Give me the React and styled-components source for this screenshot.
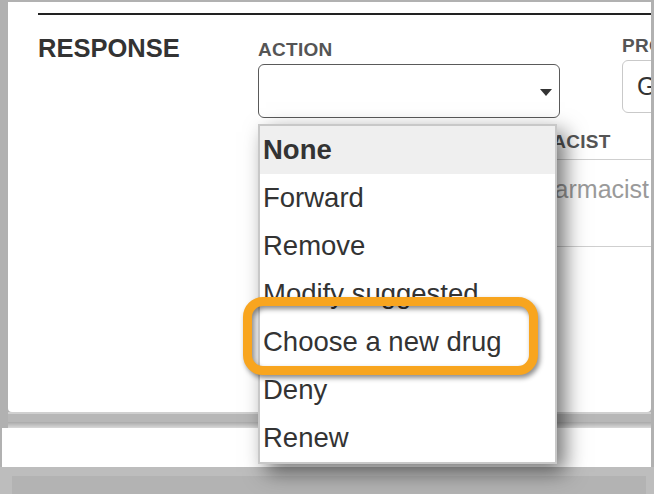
import React from 'react';
import styled, { createGlobalStyle } from 'styled-components';

const GlobalStyle = createGlobalStyle`
  html, body {
    margin: 0;
    padding: 0;
    background: #b1b1b1;
  }
  body {
    font-family: 'Liberation Sans', Arial, sans-serif;
    color: #333;
  }
  * {
    box-sizing: border-box;
  }
`;

const Screen = styled.div`
  width: 654px;
  height: 494px;
  overflow: hidden;
  padding-top: 2px;
  display: flex;
  flex-direction: column;
`;

const Card = styled.section`
  position: relative;
  flex-shrink: 0;
  height: 410px;
  margin: 0 3px 0 8px;
  padding-top: 11px;
  background: #fff;
  border-radius: 0 0 4px 4px;
  overflow-x: clip;
`;

const Rule = styled.div`
  height: 2px;
  margin-left: 30px;
  background: #222;
`;

const FormRow = styled.div`
  display: flex;
  align-items: flex-start;
  padding-left: 30px;
  margin-top: ${p => p.$top}px;
`;

const SectionTitle = styled.h2`
  flex-shrink: 0;
  width: 220px;
  margin: 0;
  font-size: 25.5px;
  line-height: 28px;
  font-weight: 700;
  color: #333;
`;

const Field = styled.div`
  flex-shrink: 0;
  width: ${p => p.$width}px;
  margin-left: ${p => p.$left || 0}px;
  margin-top: ${p => p.$top || 0}px;
`;

const Label = styled.div`
  font-size: 19px;
  line-height: 20px;
  font-weight: 700;
  letter-spacing: 0.3px;
  color: #555;
  text-transform: uppercase;
  white-space: nowrap;
  margin-bottom: ${p => p.$gap}px;
`;

const SelectWrap = styled.div`
  position: relative;
`;

const SelectBox = styled.div`
  display: flex;
  align-items: center;
  justify-content: ${p => (p.$muted ? 'flex-start' : 'flex-end')};
  height: ${p => p.$height}px;
  padding: ${p => (p.$muted ? '0 14px' : '3px 7px 0 14px')};
  border: 1.5px solid ${p => (p.$muted ? '#c9c9c9' : '#5a5a5a')};
  border-radius: 6px;
  background: #fff;
  font-size: 25px;
  color: #333;
  white-space: nowrap;
`;

const Caret = styled.span`
  width: 0;
  height: 0;
  border-left: 6.5px solid transparent;
  border-right: 6.5px solid transparent;
  border-top: 7px solid #333;
`;

const OptionList = styled.ul`
  position: absolute;
  z-index: 10;
  top: calc(100% + 6px);
  left: 0;
  width: 299px;
  margin: 0;
  padding: 0;
  list-style: none;
  background: #fff;
  border: 2px solid #c8c8c8;
  box-shadow: 8px 8px 20px rgba(0, 0, 0, 0.55);
`;

const Option = styled.li`
  height: 48px;
  padding-left: 3px;
  font-size: 27.5px;
  line-height: 48px;
  white-space: nowrap;
  color: #333;
  font-weight: ${p => (p.$active ? 700 : 400)};
  background: ${p => (p.$active ? '#efefef' : '#fff')};
`;

const Highlight = styled.div`
  position: absolute;
  left: -17px;
  top: 171px;
  width: 295px;
  height: 78px;
  border: 9px solid #f8a51f;
  border-radius: 20px;
  filter: drop-shadow(2px 3px 2.5px rgba(0, 0, 0, 0.45));
  pointer-events: none;
`;

const NoteBox = styled.textarea`
  display: block;
  width: 100%;
  height: 88px;
  margin: 0;
  padding: 12px 14px 12px 42px;
  border: 1.5px solid #cfcfcf;
  border-radius: 6px;
  resize: none;
  outline: none;
  font-family: inherit;
  font-size: 25px;
  line-height: 35px;
  color: #333;

  &::placeholder {
    color: #9a9a9a;
  }
`;

const ShadowBand = styled.div`
  flex-shrink: 0;
  height: 16px;
  margin: 0 3px 0 8px;
  background: linear-gradient(
    #d0d0d0 0,
    #d0d0d0 2px,
    #b7b7b7 2px,
    #b7b7b7 10px,
    #a9a9a9 10px,
    #d9d9d9 16px
  );
`;

const LowerPanel = styled.div`
  flex-shrink: 0;
  height: 39px;
  margin: 0 3px 0 2px;
  background: #fff;
`;

const Footer = styled.div`
  flex: 1;
  padding: 9px 8px 0 12px;
  background: #bdbdbd;
`;

const FooterBar = styled.div`
  height: 100%;
  background: #b3b3b3;
`;

const actions = [
  'None',
  'Forward',
  'Remove',
  'Modify suggested',
  'Choose a new drug',
  'Deny',
  'Renew',
];

export default function App() {
  return (
    <>
      <GlobalStyle />
      <Screen>
        <Card>
          <Rule />
          <FormRow $top={19}>
            <SectionTitle>RESPONSE</SectionTitle>
            <Field $width={302} $top={5.5}>
              <Label $gap={4.5}>Action</Label>
              <SelectWrap>
                <SelectBox $height={54}>
                  <Caret />
                </SelectBox>
                <OptionList>
                  {actions.map((a, i) => (
                    <Option key={a} $active={i === 0}>
                      {a}
                    </Option>
                  ))}
                  <Highlight />
                </OptionList>
              </SelectWrap>
            </Field>
            <Field $width={250} $left={62} $top={2}>
              <Label $gap={4}>Provider</Label>
              <SelectBox $height={53} $muted>
                Generic
              </SelectBox>
            </Field>
          </FormRow>
          <FormRow $top={13.5}>
            <Field $width={400} $left={443}>
              <Label $gap={7.5}>Pharmacist</Label>
              <NoteBox readOnly placeholder="Pharmacist" />
            </Field>
          </FormRow>
        </Card>
        <ShadowBand />
        <LowerPanel />
        <Footer>
          <FooterBar />
        </Footer>
      </Screen>
    </>
  );
}
